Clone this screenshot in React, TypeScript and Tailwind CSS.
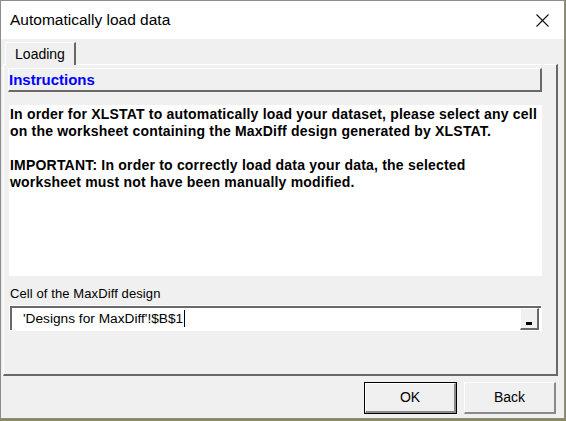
export default function App() {
  return (
    <div className="w-[566px] h-[421px] bg-[#8a8a5a] font-['Liberation_Sans',sans-serif] text-black">
      <div className="w-[565px] h-[419px] border border-[#8c8c8c] flex flex-col bg-[#f0f0f0]">
        {/* Title bar */}
        <div className="h-[38px] bg-white flex items-center justify-between pl-[9px] pr-[15px] shrink-0">
          <span className="text-[15.5px] leading-none">Automatically load data</span>
          <svg width="13" height="13" viewBox="0 0 13 13" className="mt-[1px]">
            <path d="M0.5 0.5 L12.5 12.5 M12.5 0.5 L0.5 12.5" stroke="#111" strokeWidth="1.1" />
          </svg>
        </div>

        {/* Tab strip */}
        <div className="pl-[4px] pt-[3px] flex">
          <div className="relative z-10 -mb-px w-[71px] h-[23px] border-t border-l border-white border-r-2 border-r-[#696969] bg-[#f0f0f0] flex items-center justify-center text-[14px]">
            Loading
          </div>
        </div>

        {/* Tab page */}
        <div className="ml-[2px] w-[555px] h-[312px] border-t border-l border-white border-r-2 border-b-2 border-r-[#696969] border-b-[#696969] pl-[4px] pt-[3px] flex flex-col">
          <div className="w-[534px] h-[24px] border-t border-l border-white border-r-2 border-b-2 border-r-[#696969] border-b-[#696969] flex items-center text-[15px] font-bold text-[#0000ff] leading-none">
            Instructions
          </div>
          <div className="ml-[1px] mt-[13px] w-[533px] h-[171px] bg-white pl-[1px] pt-[1px] text-[14px] font-bold leading-[17px] tracking-[0.2px] whitespace-nowrap">
            <p>
              In order for XLSTAT to automatically load your dataset, please select any cell
              <br />
              on the worksheet containing the MaxDiff design generated by XLSTAT.
            </p>
            <p className="mt-[17px]">
              IMPORTANT: In order to correctly load data your data, the selected
              <br />
              worksheet must not have been manually modified.
            </p>
          </div>
          <div className="ml-[2px] mt-[10px] h-[16px] text-[13px] leading-[16px] tracking-[0.1px]">Cell of the MaxDiff design</div>
          <div className="ml-[1px] mt-[3px] w-[533px] h-[26px] bg-white p-[1px]">
            <div className="h-full border-t-2 border-l-2 border-[#696969] flex items-center justify-between pr-[2px]">
              <div className="pl-[11px] text-[13.7px] flex items-center">
                <span>'Designs for MaxDiff'!$B$1</span>
                <span className="ml-[1px] w-px h-[17px] bg-black" />
              </div>
              <div className="w-[19px] h-[22px] border-t border-l border-white border-r-2 border-b-2 border-r-[#696969] border-b-[#696969] bg-[#f0f0f0] flex items-end justify-center pb-[3px]">
                <span className="w-[6px] h-[3px] bg-black" />
              </div>
            </div>
          </div>
        </div>

        {/* Buttons */}
        <div className="mt-[6px] flex justify-end gap-[7px] pr-[8px] text-[14px]">
          <button className="w-[93px] h-[32px] border border-black bg-[#f0f0f0] p-0">
            <div className="h-full border-t border-l border-white border-r-2 border-b-2 border-r-[#8a8a8a] border-b-[#8a8a8a] flex items-center justify-center">OK</div>
          </button>
          <button className="w-[92px] h-[32px] border-t border-l border-white border-r-2 border-b-2 border-r-[#8a8a8a] border-b-[#8a8a8a] bg-[#f0f0f0] flex items-center justify-center">
            Back
          </button>
        </div>
      </div>
    </div>
  );
}
